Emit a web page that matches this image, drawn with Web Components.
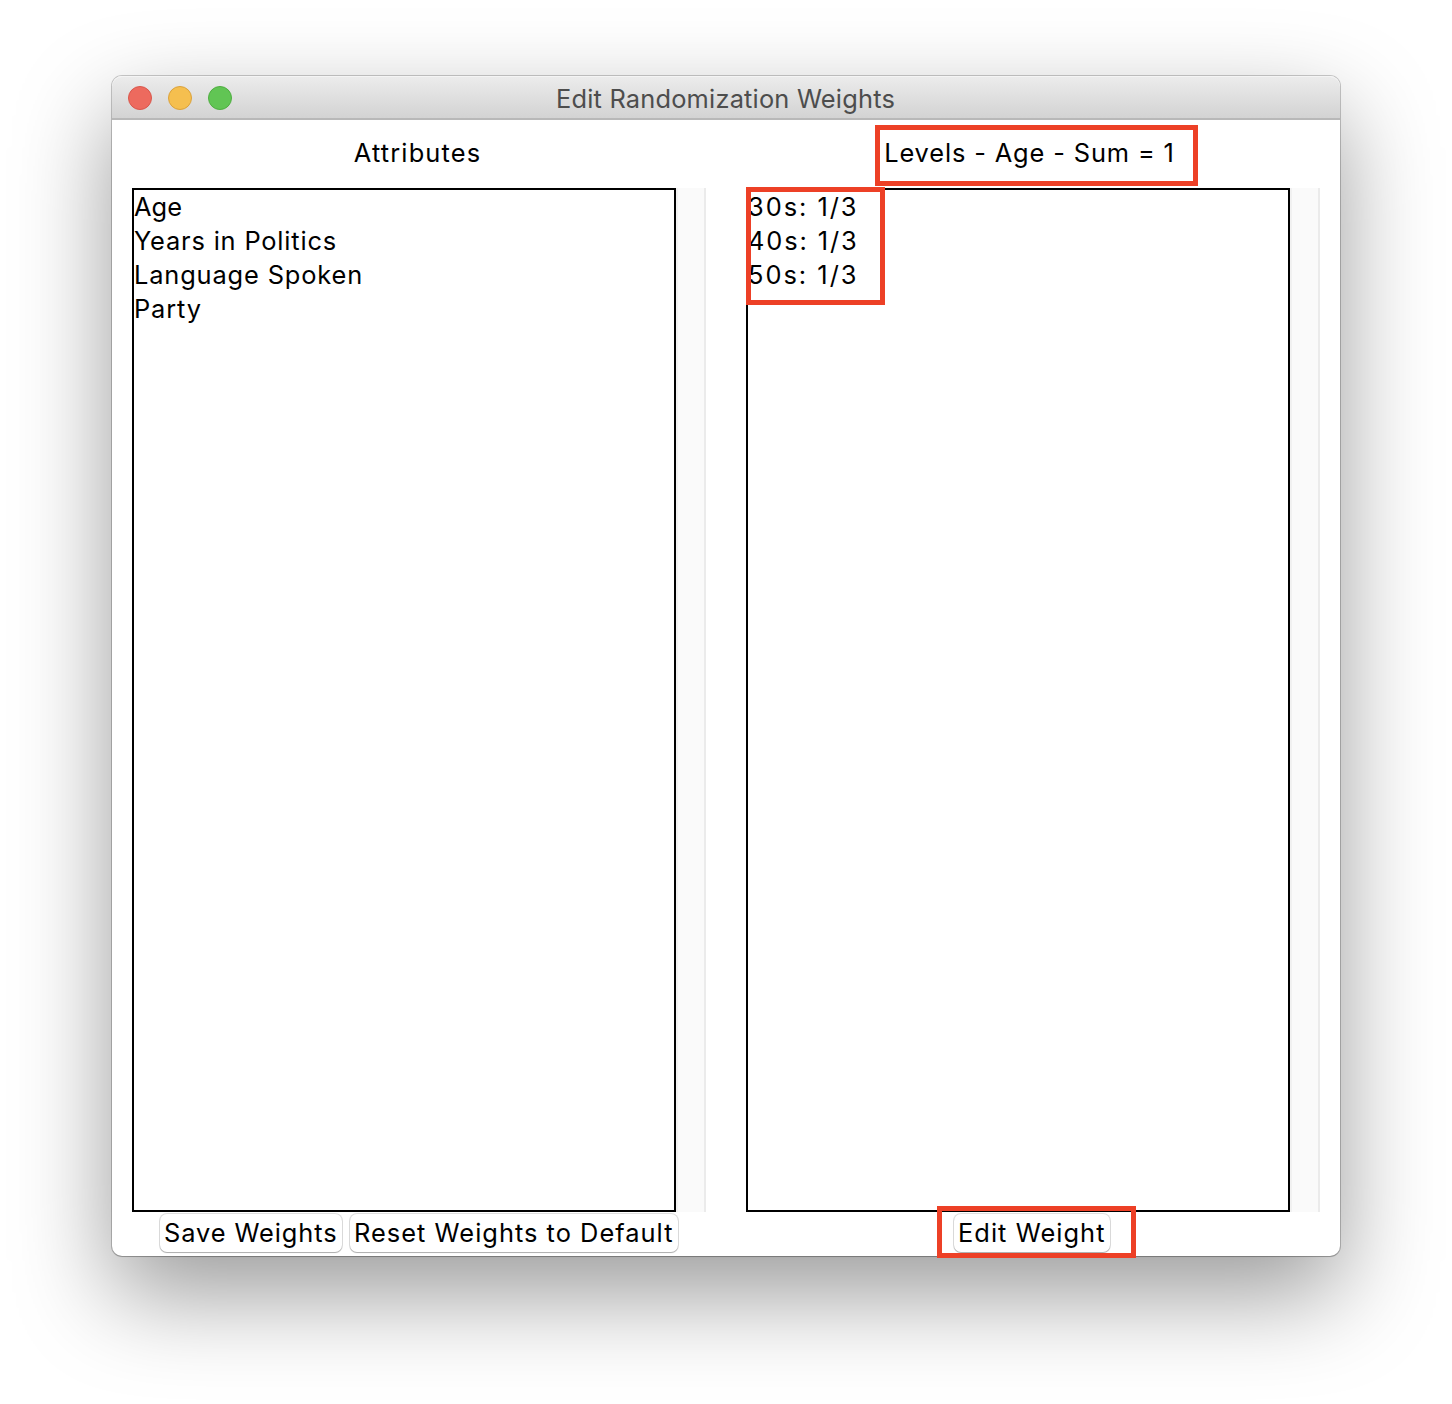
<!DOCTYPE html>
<html lang="en">
<head>
<meta charset="utf-8">
<title>Edit Randomization Weights</title>
<style>
html, body { margin: 0; background: #fff; }
body { width: 1452px; height: 1404px; overflow: hidden; position: relative; font-family: Inter, "Liberation Sans", sans-serif; font-size: 25.4px; color: #000; }
</style>
</head>
<body>
<app-window heading="Edit Randomization Weights">
  <list-pane>
    <tk-text slot="label" w="127.5" style="margin-right:1px">Attributes</tk-text>
    <tk-text w="48">Age</tk-text>
    <tk-text w="203">Years in Politics</tk-text>
    <tk-text w="229">Language Spoken</tk-text>
    <tk-text w="68">Party</tk-text>
    <tk-button slot="actions" w="184"><tk-text w="173.5">Save Weights</tk-text></tk-button>
    <tk-button slot="actions" w="330"><tk-text w="319.5">Reset Weights to Default</tk-text></tk-button>
  </list-pane>
  <list-pane>
    <tk-text slot="label" w="290.5" style="margin-right:5px">Levels - Age - Sum = 1</tk-text>
    <tk-text w="110.5">30s: 1/3</tk-text>
    <tk-text w="110.5">40s: 1/3</tk-text>
    <tk-text w="110.5">50s: 1/3</tk-text>
    <tk-button slot="actions" w="158" style="margin-right:3px"><tk-text w="147.5">Edit Weight</tk-text></tk-button>
  </list-pane>
</app-window>
<mark-box style="left:875px;top:124.5px;width:323px;height:61px"></mark-box>
<mark-box style="left:746px;top:187px;width:139px;height:118px"></mark-box>
<mark-box style="left:937px;top:1206px;width:199px;height:52px"></mark-box>
<script>
class BaseElement extends HTMLElement {
  connectedCallback() {
    if (!this.shadowRoot) this.attachShadow({ mode: 'open' }).innerHTML = this.markup();
    if (this.ready) this.ready();
  }
}

// A single line of text whose tracking is spread to fill a given width.
class TkText extends BaseElement {
  markup() {
    return `<style>:host{display:block;white-space:nowrap;line-height:34px}span{display:inline-block}</style><span><slot></slot></span>`;
  }
  ready() {
    const span = this.shadowRoot.querySelector('span');
    const n = this.textContent.length;
    const natural = span.getBoundingClientRect().width;
    span.style.letterSpacing = ((+this.getAttribute('w') - natural) / n).toFixed(3) + 'px';
  }
}

class AppWindow extends BaseElement {
  markup() {
    return `<style>
      :host{display:flex;flex-direction:column;box-sizing:border-box;width:1228px;height:1180px;margin:76px 0 0 112px;background:#fff;border-radius:10px;
        box-shadow:0 0 0 1px rgba(0,0,0,.2),0 1px 1px rgba(0,0,0,.14),0 38px 96px rgba(0,0,0,.4)}
      header{display:grid;grid-template-columns:1fr auto 1fr;align-items:center;height:44px;box-sizing:border-box;padding:1px 16px 0;border-bottom:2px solid #b8b8b8;
        border-radius:10px 10px 0 0;background:linear-gradient(#ececec,#d3d3d3);box-shadow:inset 0 1px #f4f4f4;color:#4d4d4d}
      .lights{display:flex;gap:16px}
      i{width:24px;height:24px;border-radius:50%;box-sizing:border-box;border:1px solid #d9574c;background:#ed6a5e}
      i:nth-child(2){border-color:#dba23c;background:#f5bf4f}
      i:nth-child(3){border-color:#4fae41;background:#61c554}
      header tk-text{padding-top:2px;margin-right:1px}
      main{display:flex;flex:1;min-height:0}
    </style>
    <header><div class="lights"><i></i><i></i><i></i></div><tk-text w="339">${this.getAttribute('heading')}</tk-text><div></div></header>
    <main><slot></slot></main>`;
  }
}

class ListPane extends BaseElement {
  markup() {
    return `<style>
      :host{display:flex;flex-direction:column;flex:1;padding:0 20px;min-width:0}
      .label{display:flex;justify-content:center;align-items:center;height:68px;box-sizing:border-box;padding:0 2px 2px 0}
      .body{display:flex;height:1024px}
      .list{box-sizing:border-box;width:544px;border:2px solid #000}
      .bar{box-sizing:border-box;width:30px;background:#fafafa;border-left:2px solid #f1f1f1;border-right:2px solid #ebebeb}
      .actions{display:flex;justify-content:center;gap:6px;padding-top:2px}
    </style>
    <div class="label"><slot name="label"></slot></div>
    <div class="body"><div class="list"><slot></slot></div><div class="bar"></div></div>
    <div class="actions"><slot name="actions"></slot></div>`;
  }
}

class TkButton extends BaseElement {
  markup() {
    return `<style>
      :host{display:flex;box-sizing:border-box;height:38px;padding-left:4px;align-items:center;border-radius:7px;background:#fff;
        box-shadow:0 0 0 1px rgba(0,0,0,.13),0 1px 1px rgba(0,0,0,.22);margin:0 1px}
    </style><slot></slot>`;
  }
  ready() { this.style.width = (+this.getAttribute('w') - 2) + 'px'; }
}

class MarkBox extends BaseElement {
  markup() {
    return `<style>:host{position:absolute;box-sizing:border-box;border:5px solid #ed4026}</style>`;
  }
}

customElements.define('tk-text', TkText);
customElements.define('app-window', AppWindow);
customElements.define('list-pane', ListPane);
customElements.define('tk-button', TkButton);
customElements.define('mark-box', MarkBox);
</script>
</body>
</html>
